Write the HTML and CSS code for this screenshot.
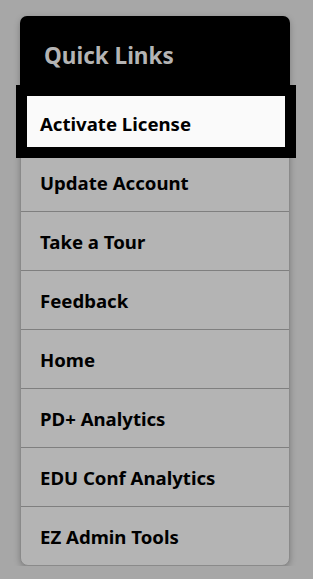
FILE: index.html
```html
<!DOCTYPE html>
<html lang="en">
<head>
    <meta charset="UTF-8">
    <meta name="viewport" content="width=device-width, initial-scale=1.0">
    <title>Quick Links</title>
    <link rel="stylesheet" href="styles.css">
</head>
<body>
    <div class="card">
        <div class="card-head">Quick Links</div>
        <ul class="links">
            <li class="active"><a href="#">Activate License</a></li>
            <li class="after-active"><a href="#">Update Account</a></li>
            <li><a href="#">Take a Tour</a></li>
            <li><a href="#">Feedback</a></li>
            <li><a href="#">Home</a></li>
            <li><a href="#">PD+ Analytics</a></li>
            <li><a href="#">EDU Conf Analytics</a></li>
            <li><a href="#">EZ Admin Tools</a></li>
        </ul>
    </div>
</body>
</html>
```

FILE: styles.css
```css
* {
    margin: 0;
    padding: 0;
    box-sizing: border-box;
    font-family: "Noto Sans", Arial, sans-serif;
}
body {
    background: #a7a7a7;
    padding: 16px 23px 0 20px;
}
.card {
    width: 270px;
    background: #b4b4b4;
    border: 1px solid #8a8a8a;
    border-radius: 8px;
    box-shadow: 0 2px 6px rgba(0, 0, 0, 0.25);
}
.card-head {
    background: #000;
    color: #b4b4b4;
    font-weight: bold;
    font-size: 22.5px;
    height: 69px;
    padding: 10px 0 0 24px;
    display: flex;
    align-items: center;
    border-radius: 7px 7px 0 0;
    margin: -1px -1px 0;
}
.links {
    list-style: none;
}
.links li {
    height: 59px;
    border-top: 1px solid #7f7f7f;
    display: flex;
    align-items: center;
    padding-left: 19px;
}
.links li:first-child {
    border-top: none;
}
.links a {
    color: #000;
    text-decoration: none;
    font-weight: bold;
    font-size: 18.6px;
}
.links li.active {
    height: 73px;
    margin: 0 -7px 0 -5px;
    border: 11px solid #000;
    background: #fafafa;
    padding: 3px 0 0 13px;
}
.links li.after-active {
    height: 53px;
    border-top: none;
    padding-bottom: 5px;
}
```
